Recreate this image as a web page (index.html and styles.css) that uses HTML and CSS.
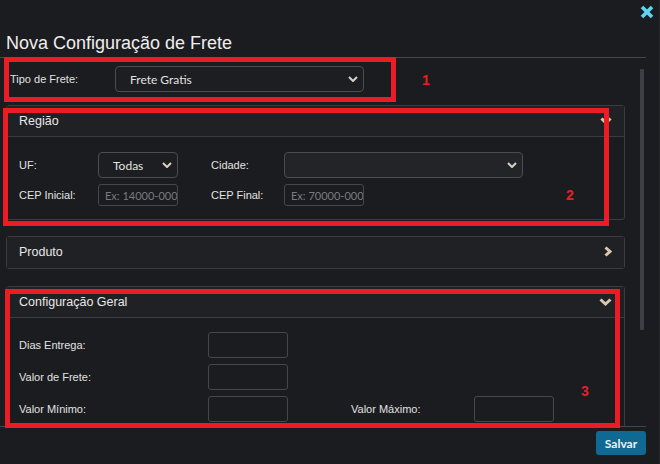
FILE: index.html
```html
<!DOCTYPE html>
<html lang="pt-BR">
<head>
  <meta charset="UTF-8">
  <meta name="viewport" content="width=device-width, initial-scale=1.0">
  <title>Nova Configuração de Frete</title>
  <link rel="stylesheet" href="styles.css">
</head>
<body>
  <div class="page">
    <div class="modal">
      <!-- cabeçalho -->
      <div class="modal_header">
        <h2 class="title">Nova Configuração de Frete</h2>
      </div>

      <!-- corpo com rolagem -->
      <div class="modal_body">
        <div class="tipo_row">
          <label class="tipo_label">Tipo de Frete:</label>
          <div class="select select_tipo">
            <span>Frete Gratis</span>
            <svg class="caret" width="10" height="6" viewBox="0 0 10 6"><polyline points="1,1 5,5 9,1"/></svg>
          </div>
        </div>

        <!-- Região -->
        <div class="panel">
          <div class="panel_heading open">
            <span>Região</span>
            <svg class="chev_down" width="12" height="8" viewBox="0 0 12 8"><polyline points="1.5,1.5 6,6 10.5,1.5"/></svg>
          </div>
          <div class="panel_body grid_regiao">
            <label>UF:</label>
            <div class="select select_uf">
              <span>Todas</span>
              <svg class="caret" width="10" height="6" viewBox="0 0 10 6"><polyline points="1,1 5,5 9,1"/></svg>
            </div>
            <label>Cidade:</label>
            <div class="select select_cidade">
              <span></span>
              <svg class="caret" width="10" height="6" viewBox="0 0 10 6"><polyline points="1,1 5,5 9,1"/></svg>
            </div>
            <label>CEP Inicial:</label>
            <input class="input_cep" type="text" placeholder="Ex: 14000-000">
            <label>CEP Final:</label>
            <input class="input_cep" type="text" placeholder="Ex: 70000-000">
          </div>
        </div>

        <!-- Produto -->
        <div class="panel">
          <div class="panel_heading">
            <span>Produto</span>
            <svg class="chev_right" width="8" height="11" viewBox="0 0 8 11"><polyline points="1.5,1.5 6,5.5 1.5,9.5"/></svg>
          </div>
        </div>

        <!-- Configuração Geral -->
        <div class="panel panel_geral">
          <div class="panel_heading open">
            <span>Configuração Geral</span>
            <svg class="chev_down" width="13" height="8" viewBox="0 0 13 8"><polyline points="1.5,1.5 6.5,6 11.5,1.5"/></svg>
          </div>
          <div class="panel_body grid_geral">
            <label>Dias Entrega:</label>
            <input class="input_num" type="text">
            <span></span><span></span>
            <label>Valor de Frete:</label>
            <input class="input_num" type="text">
            <span></span><span></span>
            <label>Valor Mínimo:</label>
            <input class="input_num" type="text">
            <label class="label_max">Valor Máximo:</label>
            <input class="input_num" type="text">
          </div>
        </div>
      </div>

      <!-- rodapé -->
      <div class="modal_footer">
        <button class="btn_salvar">Salvar</button>
      </div>

      <!-- sobreposições -->
      <button class="close">
        <svg width="14" height="14" viewBox="0 0 14 14"><path d="M2 2 L12 12 M12 2 L2 12"/></svg>
      </button>
      <div class="scroll_thumb"></div>
      <div class="mark mark_1"></div>
      <div class="mark mark_2"></div>
      <div class="mark mark_3"></div>
      <span class="num num_1">1</span>
      <span class="num num_2">2</span>
      <span class="num num_3">3</span>
    </div>
  </div>
</body>
</html>
```
FILE: styles.css
```css
*{
  margin: 0;
  padding: 0;
  box-sizing: border-box;
}
html,body{
  height: 100%;
  background-color: #1b1c1f;
  font-family: "Liberation Sans", Arial, sans-serif;
  color: #e4e4e4;
  overflow: hidden;
}
.page{
  width: 660px;
  height: 464px;
  border-right: 1px solid #26282b;
}
.modal{
  position: relative;
  width: 646px;
  height: 464px;
}

/* cabeçalho */
.modal_header{
  height: 58px;
  padding: 33px 0 0 6px;
  border-bottom: 1px solid #46474a;
}
.title{
  font-size: 18px;
  line-height: 20px;
  font-weight: 400;
  color: #eeeeee;
}
.close{
  position: absolute;
  top: 5px;
  left: 640px;
  width: 14px;
  height: 14px;
  border: 0;
  background: none;
}
.close svg{
  display: block;
  stroke: #5fd4f4;
  stroke-width: 3.6;
}

/* corpo */
.modal_body{
  height: 368px;
  padding: 0 21px 0 6px;
  overflow: hidden;
}
.tipo_row{
  display: flex;
  align-items: center;
  padding-top: 8px;
}
.tipo_label{
  width: 105px;
  margin-left: 4px;
  font-size: 11px;
}
label{
  font-size: 11px;
  color: #e2e2e2;
}
.select{
  display: flex;
  align-items: center;
  justify-content: space-between;
  height: 26px;
  padding: 0 5px 0 14px;
  border: 1px solid #4a4c4f;
  border-radius: 4px;
  background-color: #1d1e21;
  font-family: Lato, "Liberation Sans", sans-serif;
  font-size: 12px;
  color: #e2e2e2;
}
.caret{
  fill: none;
  stroke: #dcd2c2;
  stroke-width: 2;
}
.select_tipo{
  width: 249px;
}
.select_uf{
  width: 80px;
}
.select_cidade{
  width: 239px;
  background-color: #232428;
}

/* painéis */
.panel{
  margin-top: 13px;
  border: 1px solid #3b3c3f;
  border-radius: 3px;
  background-color: #1b1c1f;
}
.panel + .panel{
  margin-top: 16px;
}
.panel_geral{
  margin-top: 17px !important;
}
.panel_heading{
  display: flex;
  align-items: center;
  justify-content: space-between;
  height: 31px;
  padding: 0 12px 1px 12px;
  background-color: #202124;
  border-bottom: 1px solid transparent;
  font-size: 12.5px;
  color: #e8e8e8;
}
.panel_heading.open{
  height: 31px;
  border-bottom-color: #3b3c3f;
}
.chev_down,.chev_right{
  fill: none;
  stroke: #d8c8ae;
  stroke-width: 3;
}
.panel_body{
  display: grid;
  align-items: center;
  padding: 15px 12px 13px 12px;
  row-gap: 6px;
}
.grid_regiao{
  grid-template-columns: 79px 113px 73px 239px;
}
.grid_geral{
  grid-template-columns: 189px 143px 123px 80px;
  padding-top: 14px;
}
input{
  outline: none;
  border: 1px solid #45474a;
  border-radius: 3px;
  background-color: transparent;
  color: #ddd;
}
.input_cep{
  width: 80px;
  height: 22px;
  padding-left: 6px;
  font-family: Lato, "Liberation Sans", sans-serif;
  font-size: 11px;
}
.input_cep::placeholder{
  color: #7a7b7e;
}
.input_num{
  width: 80px;
  height: 26px;
}

/* rodapé */
.modal_footer{
  display: flex;
  justify-content: flex-end;
  height: 38px;
  padding-top: 4px;
  border-top: 1px solid #46474a;
}
.btn_salvar{
  width: 50px;
  height: 24px;
  border: 0;
  border-radius: 3px;
  background-color: #0f6993;
  color: #f2f2f2;
  font-family: Lato, "Liberation Sans", sans-serif;
  font-size: 12px;
  font-weight: 700;
}

/* barra de rolagem */
.scroll_thumb{
  position: absolute;
  top: 69px;
  left: 640px;
  width: 4px;
  height: 261px;
  background-color: #3c3f43;
  border-radius: 1px;
}

/* marcações em vermelho */
.mark{
  position: absolute;
  border: 5px solid #ec1c24;
}
.mark_1{
  top: 57px;
  left: 4px;
  width: 392px;
  height: 45px;
}
.mark_2{
  top: 108px;
  left: 3px;
  width: 606px;
  height: 118px;
}
.mark_3{
  top: 289px;
  left: 5px;
  width: 615px;
  height: 139px;
}
.num{
  position: absolute;
  font-size: 14px;
  line-height: 14px;
  font-weight: 700;
  color: #ec1c24;
}
.num_1{
  top: 73px;
  left: 422px;
}
.num_2{
  top: 188px;
  left: 566px;
}
.num_3{
  top: 384px;
  left: 581px;
}
```
